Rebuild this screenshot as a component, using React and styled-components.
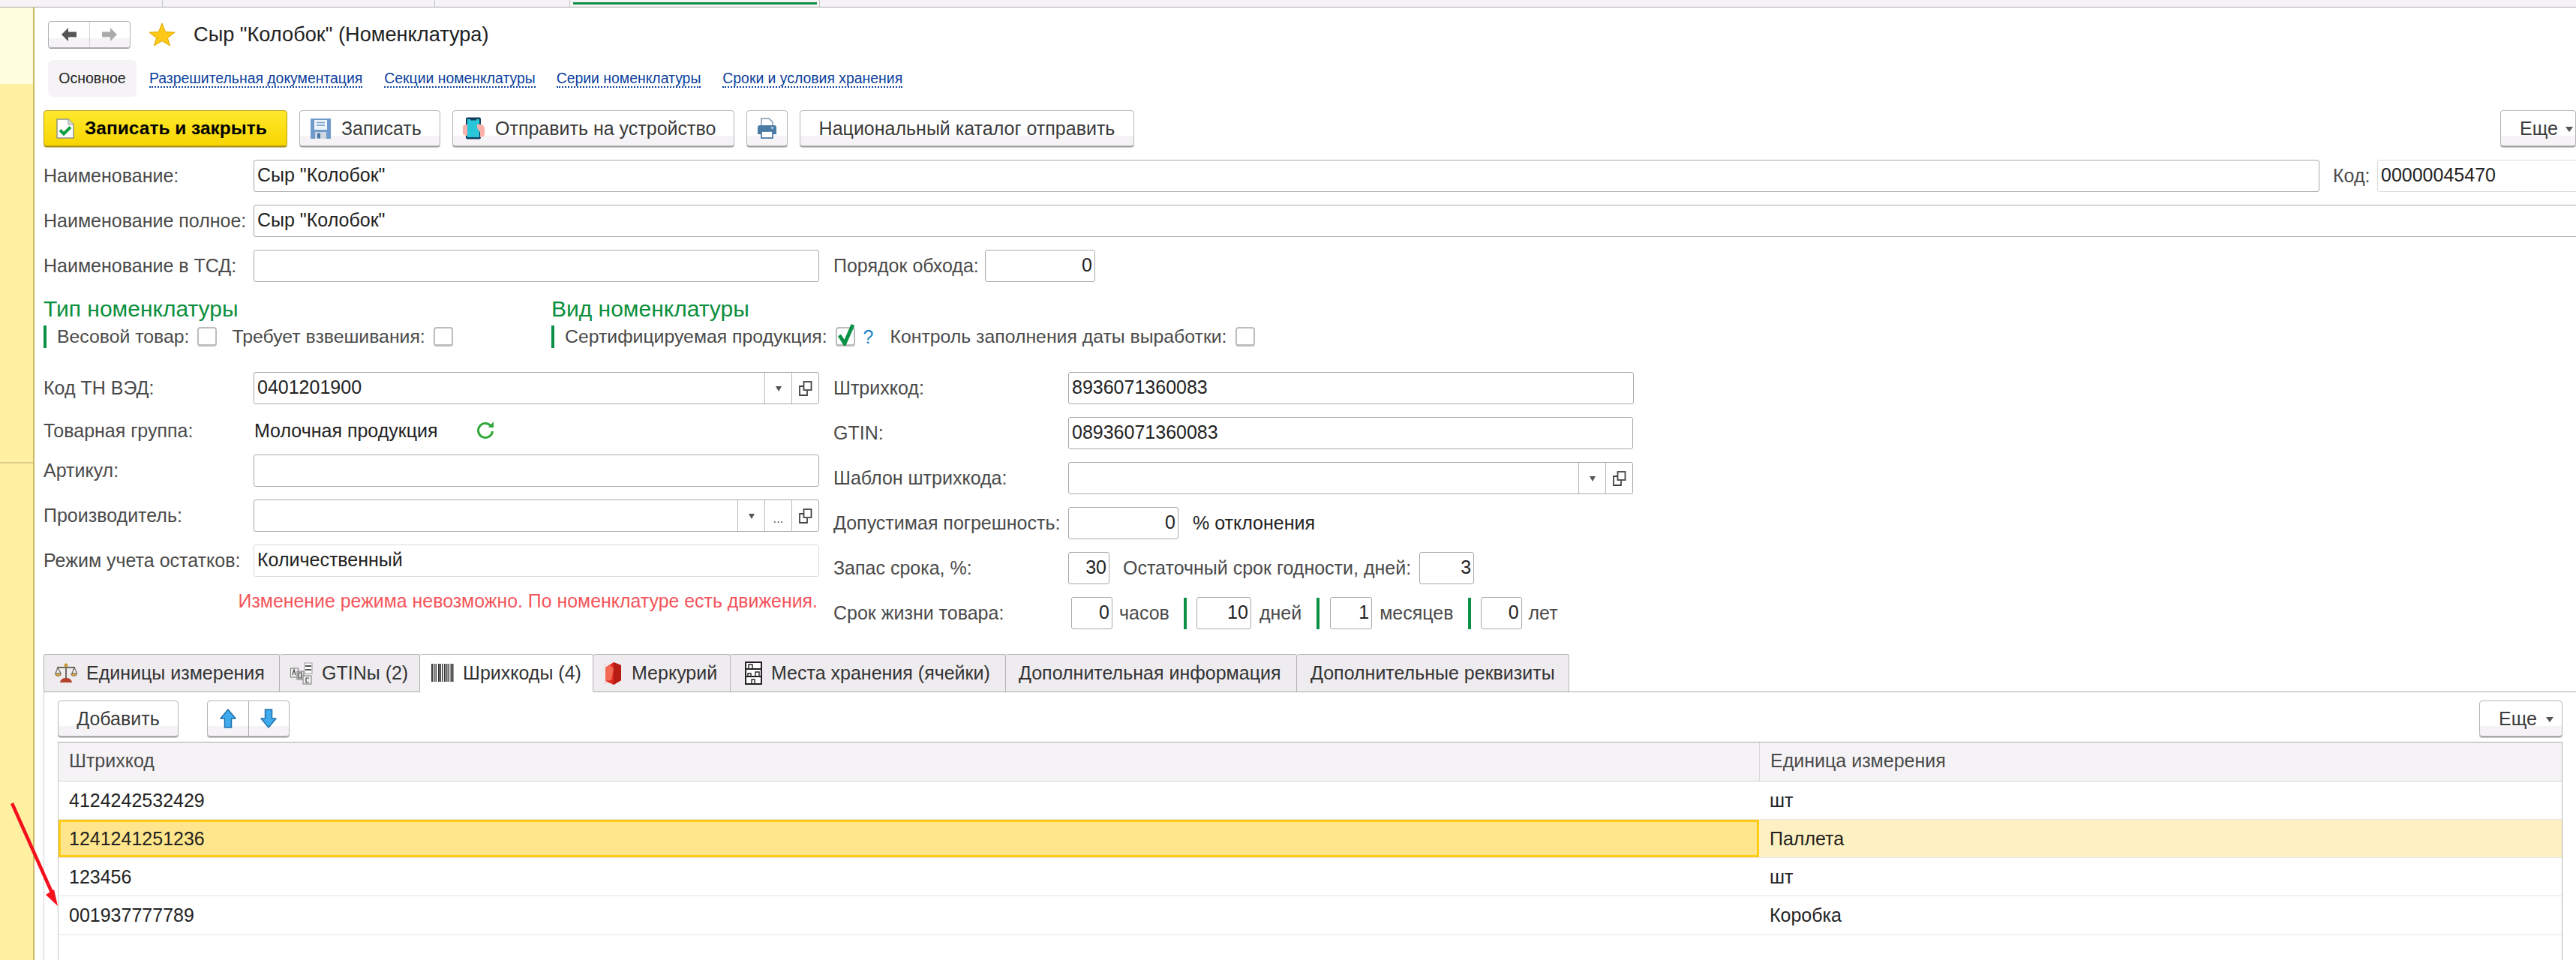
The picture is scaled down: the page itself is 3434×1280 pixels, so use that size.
import React from 'react'
import styled, { createGlobalStyle } from 'styled-components'

const GlobalStyle = createGlobalStyle`
  html, body { margin: 0; padding: 0; background: #fff; }
  body { font-family: "Liberation Sans", Arial, sans-serif; font-size: 25px; color: #222; }
  * { box-sizing: border-box; }
`

const Page = styled.div`
  position: relative;
  width: 3434px;
  height: 1280px;
  overflow: hidden;
  display: flex;
  flex-direction: column;
`
const TopStrip = styled.div`
  display: flex;
  flex: 0 0 10px;
  background: #f5f3f6;
  border-bottom: 1px solid #a8a8a8;
`
const OpenTab = styled.div`
  flex: 0 0 ${p => p.$w}px;
  border-right: 1px solid #c6c6c6;
  padding: 3px 3px 0 4px;
`
const ActiveBar = styled.div`
  height: 3px;
  background: #0c9145;
`
const Body = styled.div`
  flex: 1;
  display: flex;
  min-height: 0;
`
const Sidebar = styled.div`
  flex: 0 0 46px;
  display: flex;
  flex-direction: column;
  border-right: 2px solid #cdb95f;
`
const SideTop = styled.div`
  flex: 0 0 102px;
  background: #ffffdf;
`
const SideMid = styled.div`
  flex: 0 0 506px;
  background: #fff0a2;
  border-bottom: 2px solid #dccb85;
`
const SideRest = styled.div`
  flex: 1;
  background: #fff0a2;
`
const Main = styled.div`
  flex: 1;
  min-width: 0;
  padding: 18px 0 0 12px;
  display: flex;
  flex-direction: column;
`
const Header = styled.div`
  display: flex;
  align-items: center;
  height: 36px;
  margin-left: 6px;
`
const NavGroup = styled.div`
  display: flex;
  width: 110px;
  height: 36px;
  border: 1px solid #b0b0b0;
  border-radius: 4px;
  background: linear-gradient(#fff 65%, #f5f3f6 65%);
  box-shadow: 0 1px 0 #a0a0a0;
`
const NavCell = styled.div`
  flex: 1;
  display: flex;
  align-items: center;
  justify-content: center;
  & + & { border-left: 1px solid #d4d4d4; }
`
const StarWrap = styled.div`
  margin: 0 24px 0 24px;
  display: flex;
`
const Title = styled.div`
  font-size: 27.2px;
  color: #222;
  white-space: nowrap;
`
const FormTabs = styled.div`
  display: flex;
  align-items: center;
  height: 49px;
  margin: 16px 0 0 6px;
`
const FormTabOn = styled.div`
  width: 118px;
  height: 49px;
  display: flex;
  align-items: center;
  justify-content: center;
  font-size: 19.5px;
  color: #222;
  background: #f5f3f6;
  border-radius: 6px;
`
const FormLink = styled.a`
  font-size: 19.4px;
  margin-left: ${p => p.$ml}px;
  color: #0b3f9c;
  text-decoration: none;
  border-bottom: 2px dotted #0b3f9c;
  line-height: 22px;
  white-space: nowrap;
`
const Toolbar = styled.div`
  display: flex;
  align-items: stretch;
  height: 48px;
  gap: 16px;
  margin-top: ${p => p.$mt || 0}px;
`
const Button = styled.div`
  display: flex;
  align-items: center;
  justify-content: ${p => p.$center ? 'center' : 'flex-start'};
  gap: ${p => p.$gap || 14}px;
  width: ${p => p.$w}px;
  padding-left: ${p => p.$pl || 0}px;
  height: 48px;
  border: 1px solid #b5b5b5;
  border-radius: 4px;
  background: linear-gradient(#fff 71%, #f5f3f6 71%);
  box-shadow: 0 1.5px 0 #9c9c9c;
  color: #3a3a3a;
  font-size: 25px;
  white-space: nowrap;
`
const PrimaryButton = styled(Button)`
  background: linear-gradient(#ffe92e, #f7d500);
  border-color: #bb9f0e;
  box-shadow: 0 1.5px 0 #a68d10;
  color: #000;
  font-size: 24.5px;
  font-weight: bold;
`
const MoreButton = styled(Button)`
  margin-left: auto;
`
const Spacer = styled.div`
  flex: 1;
`
const Caret = styled.span`
  width: 0;
  height: 0;
  border-left: 5px solid transparent;
  border-right: 5px solid transparent;
  border-top: 7px solid #555;
  margin-top: 3px;
`
const FormRow = styled.div`
  display: flex;
  align-items: center;
  height: ${p => p.$h || 43}px;
  margin-top: ${p => p.$mt || 0}px;
  white-space: nowrap;
`
const Label = styled.div`
  flex: 0 0 ${p => p.$w}px;
  margin-left: ${p => p.$ml || 0}px;
  color: #4a4a4a;
`
const Field = styled.div`
  flex: 0 0 ${p => p.$w}px;
  display: flex;
  align-items: stretch;
  height: ${p => p.$h || 43}px;
  margin-left: ${p => p.$ml || 0}px;
  border: 1.5px solid ${p => p.$ro ? '#dadada' : '#a9a9a9'};
  border-radius: 3px;
  background: #fff;
  overflow: hidden;
`
const FieldText = styled.div`
  flex: 1;
  display: flex;
  align-items: center;
  justify-content: ${p => p.$right ? 'flex-end' : 'flex-start'};
  padding: 0 3px 2px 4px;
  color: #222;
`
const FieldBtn = styled.div`
  flex: 0 0 36px;
  display: flex;
  align-items: ${p => p.$dots ? 'flex-end' : 'center'};
  justify-content: center;
  border-left: 1.5px solid #b9b9b9;
  font-size: 17px;
  color: #555;
  padding-bottom: ${p => p.$dots ? 6 : 0}px;
`
const Sections = styled.div`
  display: grid;
  grid-template-columns: 677px 1fr;
  margin-top: 20px;
`
const SectionTitle = styled.div`
  font-size: 30px;
  line-height: 32px;
  color: #0a8f3c;
`
const CheckGroup = styled.div`
  display: flex;
  align-items: center;
  height: 30px;
  margin-top: 6px;
  padding-left: 14px;
  border-left: 4px solid #0a9146;
  white-space: nowrap;
`
const CheckLabel = styled.span`
  color: #4a4a4a;
  margin-left: ${p => p.$ml || 0}px;
  font-size: 24.8px;
`
const CheckBox = styled.span`
  position: relative;
  flex: 0 0 26px;
  height: 26px;
  margin-left: 11px;
  border: 2px solid #bdbdbd;
  border-bottom-width: 3px;
  border-radius: 4px;
  background: #fff;
`
const CheckMark = styled.svg`
  position: absolute;
  left: 0;
  top: -7px;
`
const Hint = styled.span`
  color: #1583c9;
  margin-left: 11px;
`
const Columns = styled.div`
  display: grid;
  grid-template-columns: 1053px 1fr;
  margin-top: 32px;
`
const Col = styled.div`
  display: flex;
  flex-direction: column;
`
const RightRows = styled(Col)`
  gap: 17px;
`
const PlainValue = styled.div`
  flex: 0 0 auto;
  color: #222;
`
const RefreshWrap = styled.div`
  margin-left: 52px;
  display: flex;
`
const ErrorText = styled.div`
  height: 30px;
  margin-top: 17px;
  width: 1032px;
  text-align: right;
  line-height: 30px;
  font-size: 24.9px;
  color: #f4555b;
  white-space: nowrap;
`
const Unit = styled.span`
  color: ${p => p.$dark ? '#222' : '#4a4a4a'};
  margin-left: ${p => p.$ml}px;
`
const GreenBar = styled.div`
  flex: 0 0 4px;
  height: 42px;
  margin-left: ${p => p.$ml}px;
  background: #0a9146;
`
const TabStrip = styled.div`
  display: flex;
  height: 51px;
  margin-top: 33px;
  border-bottom: 1.5px solid #ababab;
`
const Tab = styled.div`
  flex: 0 0 ${p => p.$w}px;
  display: flex;
  align-items: center;
  gap: ${p => p.$gap || 12}px;
  padding-left: ${p => p.$pl}px;
  background: ${p => p.$active ? '#fff' : '#efecf0'};
  border: 1.5px solid #b4b4b4;
  border-left-width: ${p => p.$first ? 1.5 : 0}px;
  border-bottom: ${p => p.$active ? '2px solid #fff' : 'none'};
  border-radius: 3px 3px 0 0;
  height: ${p => p.$active ? 51 : 50}px;
  color: #333;
  white-space: nowrap;
`
const Panel = styled.div`
  flex: 1;
  min-height: 0;
  padding: 11px 18px 0 18px;
  border-left: 1.5px solid #cfcfcf;
  overflow: hidden;
`
const ArrowGroup = styled.div`
  display: flex;
  width: 110px;
  margin-left: 22px;
  height: 48px;
  border: 1px solid #b5b5b5;
  border-radius: 4px;
  background: linear-gradient(#fff 71%, #f5f3f6 71%);
  box-shadow: 0 1.5px 0 #9c9c9c;
`
const GroupCell = styled.div`
  flex: 1;
  display: flex;
  align-items: center;
  justify-content: center;
  & + & { border-left: 1px solid #a9a9a9; }
`
const Table = styled.div`
  height: 400px;
  margin-top: 7px;
  border-top: 1.5px solid #a9a9a9;
  border-left: 1.5px solid #c4c4c4;
  border-right: 1.5px solid #b0b0b0;
`
const TableHead = styled.div`
  display: grid;
  grid-template-columns: 2267px 1fr;
  height: 52px;
  background: #f5f3f6;
  border-bottom: 1.5px solid #d2d2d2;
  color: #4a4a4a;
`
const HeadCell = styled.div`
  display: flex;
  align-items: center;
  padding: 0 0 3px 14px;
  & + & { border-left: 1.5px solid #d8d8d8; }
`
const TableRow = styled.div`
  display: grid;
  grid-template-columns: 2267px 1fr;
  height: ${p => p.$h}px;
  border-bottom: 1.5px solid #e4e4e4;
  background: ${p => p.$selected ? '#fdf0c2' : '#fff'};
`
const Cell = styled.div`
  display: flex;
  align-items: center;
  padding-left: ${p => p.$active ? 11 : 14}px;
  color: #222;
  background: ${p => p.$active ? '#ffe58b' : 'transparent'};
  border: ${p => p.$active ? '3px solid #ffcc14' : 'none'};
`
const ArrowOverlay = styled.svg`
  position: absolute;
  left: 0;
  top: 0;
  pointer-events: none;
`

const Triangle = () => (
  <svg width="10" height="10" viewBox="0 0 10 10"><path d="M1 2h8L5 9z" fill="#555" /></svg>
)
const OpenIcon = () => (
  <svg width="18" height="20" viewBox="0 0 18 20" fill="none" stroke="#444" strokeWidth="1.8">
    <rect x="6.5" y="1" width="10" height="11" fill="#fff" />
    <path d="M6 7H1v12h10v-6" />
  </svg>
)
const NavArrow = ({ dir, color }) => (
  <svg width="22" height="20" viewBox="0 0 22 20" style={dir === 'right' ? { transform: 'scaleX(-1)' } : undefined}>
    <path d="M1 10 10 1v5.5h11v7H10V19z" fill={color} />
  </svg>
)
const Star = () => (
  <svg width="36" height="32" viewBox="0 0 36 32">
    <path d="M18 1l4.6 11.6L35 13.2l-9.6 7.6L28.700 31 18 24.600 7.300 31l3.300-10.200L1 13.200l12.400-.6z" fill="#ffc917" stroke="#dca700" strokeWidth="1" />
  </svg>
)
const SaveCloseIcon = () => (
  <svg width="24" height="27" viewBox="0 0 24 27">
    <path d="M1 1h15l7 7v18H1z" fill="#fff" stroke="#8f9488" strokeWidth="1.500" />
    <path d="M16 1v7h7" fill="#dfe2da" stroke="#8f9488" strokeWidth="1" />
    <path d="M5 15.500l5 5 9-9" fill="none" stroke="#12a03e" strokeWidth="4" />
  </svg>
)
const FloppyIcon = () => (
  <svg width="27" height="27" viewBox="0 0 27 27">
    <path d="M0 0h27v27H0z" fill="#6f9bcb" />
    <rect x="5" y="2" width="17" height="13" fill="#eef3f8" />
    <path d="M8 5.500h11M8 9h11" stroke="#6f9bcb" strokeWidth="1.500" />
    <rect x="6" y="18" width="15" height="9" fill="#cfd8e2" />
    <rect x="9" y="19.500" width="4" height="7" fill="#4a78a8" />
  </svg>
)
const PhoneIcon = () => (
  <svg width="30" height="30" viewBox="0 0 30 30">
    <rect x="4" y="0.500" width="20" height="29" rx="2" fill="#15405e" />
    <rect x="6" y="3" width="16" height="24" fill="#29c5d8" />
    <path d="M10 3h8v1.500h-8z" fill="#15405e" />
    <path d="M0 13c0-2 3-3 6-3v15c-3 0-5-1-6-3z" fill="#f9b0a8" />
    <path d="M19 10c5-1 9 0 10 4v9c-1 3-3 4-6 4v-7l-4-5z" fill="#f9b0a8" />
  </svg>
)
const PrinterIcon = () => (
  <svg width="27" height="28" viewBox="0 0 27 28">
    <path d="M6 1h10l5 5v7H6z" fill="#fff" stroke="#7f95aa" strokeWidth="1.500" />
    <path d="M1 13a3 3 0 0 1 3-3h19a3 3 0 0 1 3 3v9H1z" fill="#4c7ba5" />
    <rect x="19" y="12.500" width="3" height="2" fill="#d7e3ee" />
    <rect x="6" y="18" width="15" height="9" fill="#fff" stroke="#4c7ba5" strokeWidth="1.800" />
  </svg>
)
const RefreshIcon = () => (
  <svg width="24" height="24" viewBox="0 0 24 24" fill="none">
    <path d="M18 5.500A9.500 9.500 0 1 0 20.500 13" stroke="#2fa83a" strokeWidth="3" />
    <path d="M15 8h7V0z" fill="#2fa83a" />
  </svg>
)
const ScaleIcon = () => (
  <svg width="30" height="27" viewBox="0 0 30 27">
    <path d="M15 2v18" stroke="#6f6a60" strokeWidth="2" />
    <path d="M3 6h24" stroke="#6f6a60" strokeWidth="2" />
    <circle cx="15" cy="3" r="2.500" fill="#c99a3a" />
    <path d="M4 6l-3 8h7zM26 6l-3 8h7z" fill="none" stroke="#6f6a60" strokeWidth="1.200" />
    <path d="M0.500 14h8a4 3.500 0 0 1-8 0zM21.500 14h8a4 3.500 0 0 1-8 0z" fill="#dba63e" stroke="#6f6a60" strokeWidth="0.800" />
    <path d="M7 26c1-5 4-6 8-6s7 1 8 6z" fill="#b5432c" />
  </svg>
)
const GtinIcon = () => (
  <svg width="30" height="30" viewBox="0 0 30 30">
    <rect x="0.500" y="8" width="10" height="12" fill="#eee" stroke="#777" />
    <rect x="9" y="12" width="9" height="11" fill="#e2e2e2" stroke="#777" />
    <rect x="17" y="18" width="11" height="11" fill="#eee" stroke="#777" />
    <rect x="19" y="1" width="10" height="14" fill="#fff" stroke="#999" />
    <path d="M20 5h8M20 10h8" stroke="#555" strokeWidth="2" />
    <path d="M3 17l2-7 2 7M11 14v7h4v-7zM25 21h-4v6h4" fill="none" stroke="#444" strokeWidth="1.200" />
  </svg>
)
const BarcodeIcon = () => (
  <svg width="30" height="24" viewBox="0 0 30 24" fill="#3a3a3a">
    {[0, 3, 5.500, 9, 11.500, 14, 17, 20, 22.500, 25.500, 28].map((x, i) => (
      <rect key={x} x={x} y="0" width={i % 3 === 0 ? 2 : 1.500} height="24" />
    ))}
  </svg>
)
const RubyIcon = () => (
  <svg width="25" height="30" viewBox="0 0 25 30">
    <path d="M2 7l11-7 10 4v20l-10 6-11-5z" fill="#de2d20" />
    <path d="M13 0l10 4v20l-10 6z" fill="#b71c14" />
    <path d="M2 7l6-3 5 4-3 16-8 1z" fill="#f36a55" />
    <path d="M0 3h3M0 28h4" stroke="#f4d5d0" strokeWidth="2" />
  </svg>
)
const ShelfIcon = () => (
  <svg width="23" height="31" viewBox="0 0 23 31" fill="none" stroke="#222" strokeWidth="2">
    <rect x="1" y="1" width="21" height="29" fill="#fff" />
    <path d="M1 10h21M1 20h21" />
    <path d="M5 10V4h5v6M14 20v-6h5v6M4 20v-4h4v4M9 30v-6h4v6" strokeWidth="1.400" />
  </svg>
)
const BlueArrow = ({ down }) => (
  <svg width="22" height="26" viewBox="0 0 22 26" style={down ? { transform: 'scaleY(-1)' } : undefined}>
    <path d="M11 1 21 13h-5.500v12h-9V13H1z" fill="#3fabee" stroke="#1f70aa" strokeWidth="1.500" strokeLinejoin="round" />
  </svg>
)

const openTabs = [217, 363, 180, 333]
const tableRows = [
  { code: '4124242532429', unit: 'шт', h: 51 },
  { code: '1241241251236', unit: 'Паллета', h: 51, selected: true },
  { code: '123456', unit: 'шт', h: 51 },
  { code: '001937777789', unit: 'Коробка', h: 52 },
]

export default function App() {
  return (
    <Page>
      <GlobalStyle />
      <TopStrip>
        {openTabs.map((w, i) => (
          <OpenTab key={w} $w={w}>{i === 3 && <ActiveBar />}</OpenTab>
        ))}
      </TopStrip>
      <Body>
        <Sidebar>
          <SideTop />
          <SideMid />
          <SideRest />
        </Sidebar>
        <Main>
          <Header>
            <NavGroup>
              <NavCell><NavArrow dir="left" color="#555" /></NavCell>
              <NavCell><NavArrow dir="right" color="#ababab" /></NavCell>
            </NavGroup>
            <StarWrap><Star /></StarWrap>
            <Title>Сыр "Колобок" (Номенклатура)</Title>
          </Header>
          <FormTabs>
            <FormTabOn>Основное</FormTabOn>
            <FormLink $ml={17}>Разрешительная документация</FormLink>
            <FormLink $ml={29}>Секции номенклатуры</FormLink>
            <FormLink $ml={28}>Серии номенклатуры</FormLink>
            <FormLink $ml={29}>Сроки и условия хранения</FormLink>
          </FormTabs>
          <Toolbar $mt={18}>
            <PrimaryButton $w={325} $pl={16}><SaveCloseIcon />Записать и закрыть</PrimaryButton>
            <Button $w={188} $pl={14}><FloppyIcon />Записать</Button>
            <Button $w={376} $pl={13} $gap={13}><PhoneIcon />Отправить на устройство</Button>
            <Button $w={55} $center><PrinterIcon /></Button>
            <Button $w={446} $center>Национальный каталог отправить</Button>
            <Spacer />
            <MoreButton $w={101} $pl={25} $gap={10}>Еще <Caret /></MoreButton>
          </Toolbar>
          <FormRow $mt={18}>
            <Label $w={280}>Наименование:</Label>
            <Field $w={2754}><FieldText>Сыр "Колобок"</FieldText></Field>
            <Label $w={59} $ml={18}>Код:</Label>
            <Field $w={300} $ro><FieldText>00000045470</FieldText></Field>
          </FormRow>
          <FormRow $mt={17}>
            <Label $w={280}>Наименование полное:</Label>
            <Field $w={3120}><FieldText>Сыр "Колобок"</FieldText></Field>
          </FormRow>
          <FormRow $mt={17}>
            <Label $w={280}>Наименование в ТСД:</Label>
            <Field $w={754} />
            <Label $w={202} $ml={19}>Порядок обхода:</Label>
            <Field $w={147}><FieldText $right>0</FieldText></Field>
          </FormRow>
          <Sections>
            <div>
              <SectionTitle>Тип номенклатуры</SectionTitle>
              <CheckGroup>
                <CheckLabel>Весовой товар:</CheckLabel>
                <CheckBox />
                <CheckLabel $ml={20}>Требует взвешивания:</CheckLabel>
                <CheckBox />
              </CheckGroup>
            </div>
            <div>
              <SectionTitle>Вид номенклатуры</SectionTitle>
              <CheckGroup>
                <CheckLabel>Сертифицируемая продукция:</CheckLabel>
                <CheckBox>
                  <CheckMark width="24" height="30" viewBox="0 0 24 30">
                    <path d="M3 16l7 11L21 2" fill="none" stroke="#0a9146" strokeWidth="5" />
                  </CheckMark>
                </CheckBox>
                <Hint>?</Hint>
                <CheckLabel $ml={22}>Контроль заполнения даты выработки:</CheckLabel>
                <CheckBox />
              </CheckGroup>
            </div>
          </Sections>
          <Columns>
            <Col>
              <FormRow>
                <Label $w={280}>Код ТН ВЭД:</Label>
                <Field $w={754}>
                  <FieldText>0401201900</FieldText>
                  <FieldBtn><Triangle /></FieldBtn>
                  <FieldBtn><OpenIcon /></FieldBtn>
                </Field>
              </FormRow>
              <FormRow $h={30} $mt={20}>
                <Label $w={281}>Товарная группа:</Label>
                <PlainValue>Молочная продукция</PlainValue>
                <RefreshWrap><RefreshIcon /></RefreshWrap>
              </FormRow>
              <FormRow $mt={17}>
                <Label $w={280}>Артикул:</Label>
                <Field $w={754} />
              </FormRow>
              <FormRow $mt={17}>
                <Label $w={280}>Производитель:</Label>
                <Field $w={754}>
                  <FieldText />
                  <FieldBtn><Triangle /></FieldBtn>
                  <FieldBtn $dots>...</FieldBtn>
                  <FieldBtn><OpenIcon /></FieldBtn>
                </Field>
              </FormRow>
              <FormRow $mt={17}>
                <Label $w={280}>Режим учета остатков:</Label>
                <Field $w={754} $ro><FieldText>Количественный</FieldText></Field>
              </FormRow>
              <ErrorText>Изменение режима невозможно. По номенклатуре есть движения.</ErrorText>
            </Col>
            <RightRows>
              <FormRow>
                <Label $w={313}>Штрихкод:</Label>
                <Field $w={754}><FieldText>8936071360083</FieldText></Field>
              </FormRow>
              <FormRow>
                <Label $w={313}>GTIN:</Label>
                <Field $w={753}><FieldText>08936071360083</FieldText></Field>
              </FormRow>
              <FormRow>
                <Label $w={313}>Шаблон штрихкода:</Label>
                <Field $w={753}>
                  <FieldText />
                  <FieldBtn><Triangle /></FieldBtn>
                  <FieldBtn><OpenIcon /></FieldBtn>
                </Field>
              </FormRow>
              <FormRow>
                <Label $w={313}>Допустимая погрешность:</Label>
                <Field $w={147}><FieldText $right>0</FieldText></Field>
                <Unit $dark $ml={19}>% отклонения</Unit>
              </FormRow>
              <FormRow>
                <Label $w={313}>Запас срока, %:</Label>
                <Field $w={55}><FieldText $right>30</FieldText></Field>
                <Unit $ml={18}>Остаточный срок годности, дней:</Unit>
                <Field $w={73} $ml={11}><FieldText $right>3</FieldText></Field>
              </FormRow>
              <FormRow>
                <Label $w={317}>Срок жизни товара:</Label>
                <Field $w={55}><FieldText $right>0</FieldText></Field>
                <Unit $ml={9}>часов</Unit>
                <GreenBar $ml={19} />
                <Field $w={73} $ml={13}><FieldText $right>10</FieldText></Field>
                <Unit $ml={11}>дней</Unit>
                <GreenBar $ml={20} />
                <Field $w={56} $ml={14}><FieldText $right>1</FieldText></Field>
                <Unit $ml={10}>месяцев</Unit>
                <GreenBar $ml={19} />
                <Field $w={55} $ml={13}><FieldText $right>0</FieldText></Field>
                <Unit $ml={9}>лет</Unit>
              </FormRow>
            </RightRows>
          </Columns>
          <TabStrip>
            <Tab $w={315} $pl={14} $first><ScaleIcon />Единицы измерения</Tab>
            <Tab $w={187} $pl={14}><GtinIcon />GTINы (2)</Tab>
            <Tab $w={231} $pl={15} $active $gap={12}><BarcodeIcon />Шрихкоды (4)</Tab>
            <Tab $w={183} $pl={14}><RubyIcon />Меркурий</Tab>
            <Tab $w={367} $pl={19}><ShelfIcon />Места хранения (ячейки)</Tab>
            <Tab $w={388} $pl={17}>Дополнительная информация</Tab>
            <Tab $w={363} $pl={18}>Дополнительные реквизиты</Tab>
          </TabStrip>
          <Panel>
            <Toolbar>
              <Button $w={161} $center>Добавить</Button>
              <ArrowGroup>
                <GroupCell><BlueArrow /></GroupCell>
                <GroupCell><BlueArrow down /></GroupCell>
              </ArrowGroup>
              <Spacer />
              <MoreButton $w={111} $pl={25} $gap={12}>Еще <Caret /></MoreButton>
            </Toolbar>
            <Table>
              <TableHead>
                <HeadCell>Штрихкод</HeadCell>
                <HeadCell>Единица измерения</HeadCell>
              </TableHead>
              {tableRows.map(r => (
                <TableRow key={r.code} $h={r.h} $selected={r.selected}>
                  <Cell $active={r.selected}>{r.code}</Cell>
                  <Cell>{r.unit}</Cell>
                </TableRow>
              ))}
            </Table>
          </Panel>
        </Main>
      </Body>
      <ArrowOverlay width="100" height="1280" viewBox="0 0 100 1280">
        <path d="M16 1071 70 1192" stroke="#f5101c" strokeWidth="4.500" fill="none" />
        <path d="M77 1208 61 1193 72 1186z" fill="#f5101c" />
      </ArrowOverlay>
    </Page>
  )
}
